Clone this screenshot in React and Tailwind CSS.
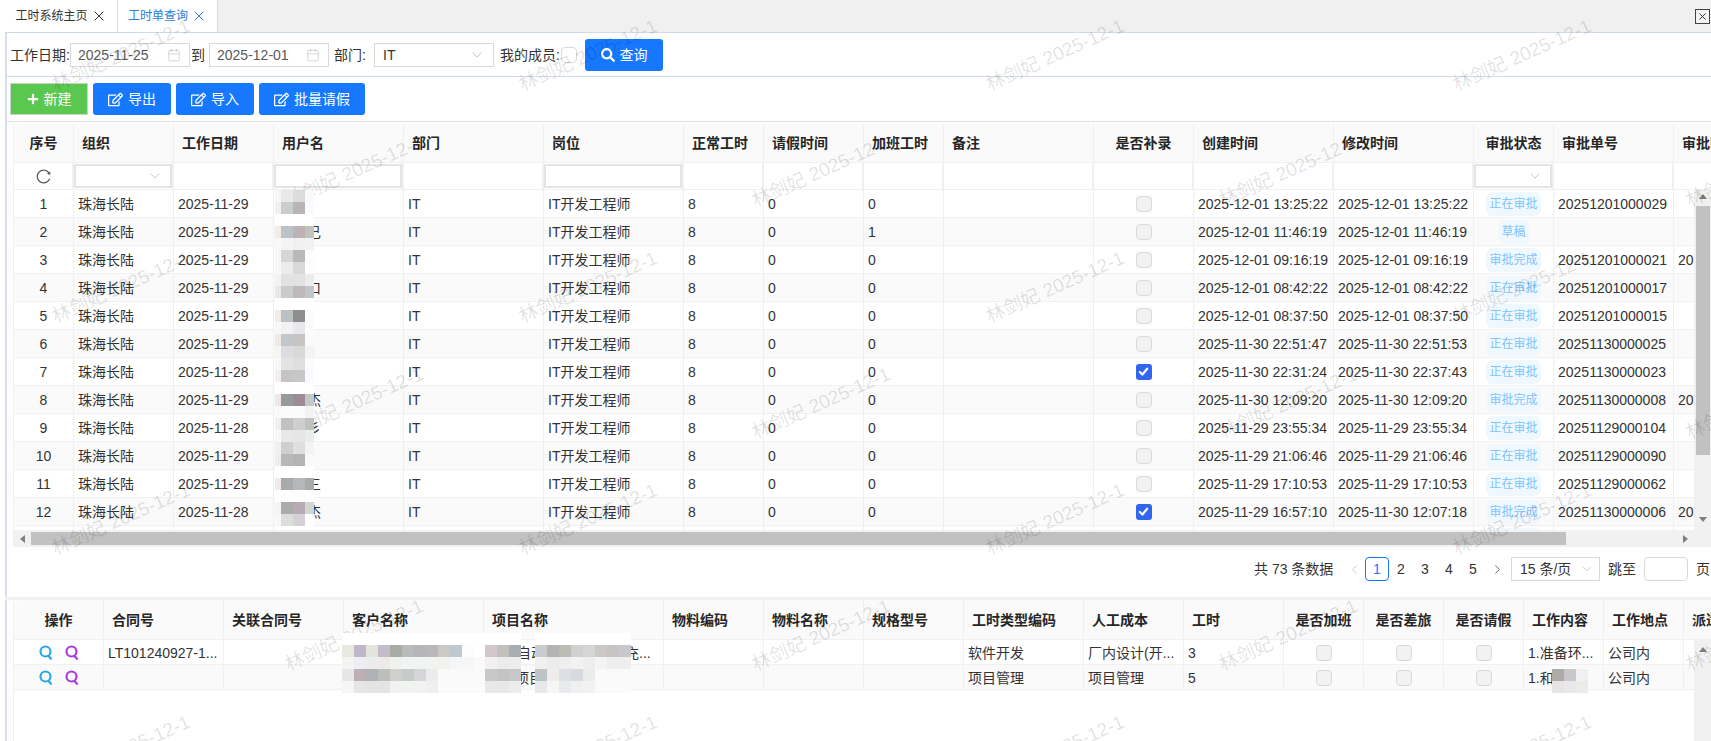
import { ChevronDown, ChevronLeft, ChevronRight, Calendar, X } from "lucide-react"
import { FaPlus, FaRegEdit, FaSearch } from "react-icons/fa"
import { AiOutlineReload } from "react-icons/ai"

const mainCols = [
  { title: "序号", w: "w-[60px]", center: true },
  { title: "组织", w: "w-[100px]" },
  { title: "工作日期", w: "w-[100px]" },
  { title: "用户名", w: "w-[130px]" },
  { title: "部门", w: "w-[140px]" },
  { title: "岗位", w: "w-[140px]" },
  { title: "正常工时", w: "w-[80px]" },
  { title: "请假时间", w: "w-[100px]" },
  { title: "加班工时", w: "w-[80px]" },
  { title: "备注", w: "w-[150px]" },
  { title: "是否补录", w: "w-[100px]", center: true },
  { title: "创建时间", w: "w-[140px]" },
  { title: "修改时间", w: "w-[140px]" },
  { title: "审批状态", w: "w-[80px]", center: true },
  { title: "审批单号", w: "w-[120px]" },
  { title: "审批时间", w: "w-[120px]" },
]

const subCols = [
  { title: "操作", w: "w-[90px]", center: true },
  { title: "合同号", w: "w-[120px]" },
  { title: "关联合同号", w: "w-[120px]" },
  { title: "客户名称", w: "w-[140px]" },
  { title: "项目名称", w: "w-[180px]" },
  { title: "物料编码", w: "w-[100px]" },
  { title: "物料名称", w: "w-[100px]" },
  { title: "规格型号", w: "w-[100px]" },
  { title: "工时类型编码", w: "w-[120px]" },
  { title: "人工成本", w: "w-[100px]" },
  { title: "工时", w: "w-[100px]" },
  { title: "是否加班", w: "w-[80px]", center: true },
  { title: "是否差旅", w: "w-[80px]", center: true },
  { title: "是否请假", w: "w-[80px]", center: true },
  { title: "工作内容", w: "w-[80px]" },
  { title: "工作地点", w: "w-[80px]" },
  { title: "派遣单位", w: "w-[80px]" },
]

// date, name tail, overtime, backfilled, created, modified, status, order no, next col
const rows = [
  ["2025-11-29", "", "0", false, "2025-12-01 13:25:22", "2025-12-01 13:25:22", "正在审批", "20251201000029", ""],
  ["2025-11-29", "己", "1", false, "2025-12-01 11:46:19", "2025-12-01 11:46:19", "草稿", "", ""],
  ["2025-11-29", "", "0", false, "2025-12-01 09:16:19", "2025-12-01 09:16:19", "审批完成", "20251201000021", "20"],
  ["2025-11-29", "口", "0", false, "2025-12-01 08:42:22", "2025-12-01 08:42:22", "正在审批", "20251201000017", ""],
  ["2025-11-29", "", "0", false, "2025-12-01 08:37:50", "2025-12-01 08:37:50", "正在审批", "20251201000015", ""],
  ["2025-11-29", "", "0", false, "2025-11-30 22:51:47", "2025-11-30 22:51:53", "正在审批", "20251130000025", ""],
  ["2025-11-28", "", "0", true, "2025-11-30 22:31:24", "2025-11-30 22:37:43", "正在审批", "20251130000023", ""],
  ["2025-11-29", "杰", "0", false, "2025-11-30 12:09:20", "2025-11-30 12:09:20", "审批完成", "20251130000008", "20"],
  ["2025-11-28", "彡", "0", false, "2025-11-29 23:55:34", "2025-11-29 23:55:34", "正在审批", "20251129000104", ""],
  ["2025-11-29", "", "0", false, "2025-11-29 21:06:46", "2025-11-29 21:06:46", "正在审批", "20251129000090", ""],
  ["2025-11-29", "三", "0", false, "2025-11-29 17:10:53", "2025-11-29 17:10:53", "正在审批", "20251129000062", ""],
  ["2025-11-28", "杰", "0", true, "2025-11-29 16:57:10", "2025-11-30 12:07:18", "审批完成", "20251130000006", "20"],
]

const nameMosaic = [
  ["bg-[#f7f7f7]", "bg-[#e9e9e9]", "bg-[#dcdcde]", "bg-[#f8f9fb]"],
  ["bg-[#f0f0ee]", "bg-[#c9cdcb]", "bg-[#b8b5b6]", "bg-[#fafcff]"],
  ["bg-white", "bg-white", "bg-white", "bg-white"],
  ["bg-[#f0ebe6]", "bg-[#bcc3c8]", "bg-[#bdb2b6]", "bg-[#c2c3bd]"],
  ["bg-[#f8f8f8]", "bg-[#f4f4f6]", "bg-[#f0f0f0]", "bg-[#f2f2f2]"],
  ["bg-[#f8f8f8]", "bg-[#d6d6d6]", "bg-[#b9b9bc]", "bg-[#fcfdff]"],
  ["bg-[#f8f8f8]", "bg-[#ececec]", "bg-[#d9d9d9]", "bg-[#fdfdff]"],
  ["bg-[#f4f2f2]", "bg-[#e2e2e2]", "bg-[#e2e2e2]", "bg-[#ececec]"],
  ["bg-[#ebe6e8]", "bg-[#cbcbca]", "bg-[#bfb9bd]", "bg-[#c3c6c8]"],
  ["bg-white", "bg-white", "bg-white", "bg-white"],
  ["bg-[#f2ece8]", "bg-[#bcc1c4]", "bg-[#8e8e8e]", "bg-[#fafbfd]"],
  ["bg-[#f8f8f8]", "bg-[#f2f2f4]", "bg-[#e8e8ea]", "bg-[#fbfbfd]"],
  ["bg-[#efeae6]", "bg-[#c3c6ca]", "bg-[#c6c5c3]", "bg-[#fbfbfd]"],
  ["bg-[#f6f5f3]", "bg-[#dddce0]", "bg-[#d9d9d9]", "bg-[#f2f3f5]"],
  ["bg-[#f8f8f8]", "bg-[#e2e3e7]", "bg-[#dfdfdf]", "bg-[#fbfcfc]"],
  ["bg-[#f4efeb]", "bg-[#c5c5c7]", "bg-[#c6c8c6]", "bg-[#f8faff]"],
  ["bg-white", "bg-white", "bg-white", "bg-white"],
  ["bg-[#eee8e5]", "bg-[#979a9a]", "bg-[#9c8c98]", "bg-[#c4c8c6]"],
  ["bg-[#fafafa]", "bg-[#fbfbfb]", "bg-[#fbfbfb]", "bg-[#f3f3f3]"],
  ["bg-[#f2eeec]", "bg-[#c1c1c1]", "bg-[#cfcfcd]", "bg-[#c0c2c0]"],
  ["bg-[#f8f8f8]", "bg-[#e8e8e8]", "bg-[#e6e6e6]", "bg-[#ebedeb]"],
  ["bg-[#f2eeee]", "bg-[#cfced0]", "bg-[#dfdfdf]", "bg-[#f3f4f4]"],
  ["bg-[#f0eeec]", "bg-[#b8b8ba]", "bg-[#b4b4b4]", "bg-[#f8f9fb]"],
  ["bg-white", "bg-white", "bg-white", "bg-white"],
  ["bg-[#f0ebe8]", "bg-[#a9aaac]", "bg-[#b4b8b8]", "bg-[#abaaaa]"],
  ["bg-white", "bg-[#fdfdfd]", "bg-[#fdfdfd]", "bg-[#fdfdfd]"],
  ["bg-[#f6f3f0]", "bg-[#a9acaa]", "bg-[#b8aab4]", "bg-[#cfd6d4]"],
  ["bg-[#f8f8f8]", "bg-[#dcdedc]", "bg-[#d5d0d6]", "bg-white"],
]

const customerMosaic = [
  ["bg-white", "bg-white", "bg-white", "bg-white", "bg-white", "bg-white", "bg-white", "bg-white", "bg-white", "bg-white", "bg-white", "bg-white"],
  ["bg-[#e8e8e0]", "bg-[#c0b8c8]", "bg-[#e4e4de]", "bg-[#c4bcc6]", "bg-[#a8aca4]", "bg-[#b8bcbc]", "bg-[#b4b6ba]", "bg-[#b8b8bc]", "bg-[#ccc8c4]", "bg-[#bccacf]", "bg-[#fcfcfc]", "bg-white"],
  ["bg-[#f4f4f2]", "bg-[#eeeef2]", "bg-[#ececec]", "bg-[#eeeaea]", "bg-[#f0f2f0]", "bg-[#f2f4f4]", "bg-[#f2f4f4]", "bg-[#f2f4f2]", "bg-[#f4f2ee]", "bg-[#f4f6f8]", "bg-[#f6f6f6]", "bg-[#fafafa]"],
  ["bg-[#e8e6e4]", "bg-[#bcb0b4]", "bg-[#b0b2b6]", "bg-[#bcc0bc]", "bg-[#d0d0cc]", "bg-[#c8ccc8]", "bg-[#d6d6da]", "bg-[#e8ecec]", "bg-[#fafafa]", "bg-[#fafafa]", "bg-[#fafafa]", "bg-[#fafafa]"],
  ["bg-[#f6f6f6]", "bg-[#e6e6e8]", "bg-[#e4e4e6]", "bg-[#e4e4e4]", "bg-[#f0f2f2]", "bg-[#f2f4f2]", "bg-[#f2f2f0]", "bg-[#eef0f0]", "bg-[#fafafa]", "bg-[#fafafa]", "bg-[#fafafa]", "bg-[#fafafa]"],
]

const projectMosaicA = [
  ["bg-white", "bg-white", "bg-white"],
  ["bg-[#d0c8cc]", "bg-[#c4c0be]", "bg-[#a8aeb2]"],
  ["bg-[#f2f0f0]", "bg-[#ececec]", "bg-[#eceeec]"],
  ["bg-[#c8c8c8]", "bg-[#c4c4c4]", "bg-[#c8c8c8]"],
  ["bg-[#e8e8e8]", "bg-[#e8e8e8]", "bg-[#ececec]"],
]

const projectMosaicB = [
  ["bg-white", "bg-white", "bg-white", "bg-white", "bg-white", "bg-white", "bg-white", "bg-white"],
  ["bg-[#c8ccce]", "bg-[#b4b4b4]", "bg-[#bcbcb4]", "bg-[#d0d0d0]", "bg-[#d4d6d4]", "bg-[#ccc8c8]", "bg-[#c8c4c4]", "bg-[#c8c8cc]"],
  ["bg-[#f0f0f0]", "bg-[#ececec]", "bg-[#eeeeee]", "bg-[#f2f2f2]", "bg-[#eeeeee]", "bg-[#f4f4f6]", "bg-[#eeeeee]", "bg-[#eeeeee]"],
  ["bg-[#bcc4c8]", "bg-[#f0ecec]", "bg-[#dce0e6]", "bg-[#d8dade]", "bg-[#eaecec]", "bg-[#fafafa]", "bg-[#fafafa]", "bg-[#fafafa]"],
  ["bg-[#e6e8ec]", "bg-[#f8f6f4]", "bg-[#e8eaee]", "bg-[#f0f0f2]", "bg-[#f2f2f2]", "bg-[#fafafa]", "bg-[#fafafa]", "bg-[#fafafa]"],
]

const contentMosaic = [
  ["bg-[#aeaaa8]", "bg-[#c8c8cc]", "bg-[#f0f0f4]"],
  ["bg-[#e6e4e4]", "bg-[#e8e8ea]", "bg-[#ecebe8]"],
]

function Mosaic({ bands, cellW, bandH, className, firstW }) {
  return (
    <div className={`absolute z-20 ${className}`}>
      {bands.map((band, i) => (
        <div key={i} className={`flex ${bandH}`}>
          {band.map((color, j) => (
            <div key={j} className={`${color} ${firstW && j === 0 ? firstW : cellW}`} />
          ))}
        </div>
      ))}
    </div>
  )
}

function Tab({ label, active, w }) {
  return (
    <div className={`flex h-8 ${w} items-center justify-center gap-[3px] border-r border-[#d3dce8] bg-white text-xs ${active ? "text-[#2b7cd3]" : "text-[#333]"}`}>
      {label}
      <X size={16} strokeWidth={1.5} />
    </div>
  )
}

function DateInput({ value, w }) {
  return (
    <div className={`flex h-6 ${w} items-center justify-between border border-[#d9d9d9] pl-[7px] pr-2 text-[#595959]`}>
      {value}
      <Calendar size={14} strokeWidth={1.2} className="text-[#c4c4c4]" />
    </div>
  )
}

function BlueButton({ icon, label, w }) {
  return (
    <button className={`flex h-8 ${w} shrink-0 items-center justify-center gap-[5px] rounded-[3px] bg-[#1677ff] text-white`}>
      {icon}
      {label}
    </button>
  )
}

function HeaderRow({ cols, h }) {
  return (
    <div className={`flex ${h} overflow-hidden rounded-tl-lg border-b border-[#f0f0f0] bg-[#fafafa] font-bold text-[#262626]`}>
      {cols.map((col) => (
        <div key={col.title} className={`flex ${col.w} shrink-0 items-center overflow-hidden whitespace-nowrap border-r border-[#f0f0f0] ${col.center ? "justify-center" : "pl-[8px]"}`}>
          {col.title}
        </div>
      ))}
    </div>
  )
}

function FilterBox({ select }) {
  return (
    <div className="flex h-[24px] w-full items-center justify-end border-2 border-[#e4e4e4] bg-white pr-[7px]">
      {select && <ChevronDown size={16} strokeWidth={1} className="text-[#a8a8a8]" />}
    </div>
  )
}

function Check({ checked }) {
  if (checked) {
    return (
      <div className="flex h-4 w-4 items-center justify-center rounded-[3px] bg-[#3366ee]">
        <svg width="11" height="11" viewBox="0 0 12 12" fill="none" stroke="white" strokeWidth="2.4" strokeLinecap="round" strokeLinejoin="round">
          <path d="M2 6.5l2.8 2.8L10 3" />
        </svg>
      </div>
    )
  }
  return <div className="h-4 w-4 rounded-[4px] border border-[#d9d9d9] bg-[#f2f2f2]" />
}

function StatusTag({ text }) {
  return (
    <span className="flex h-6 items-center rounded-md bg-[#f0f8ff] px-[3px] text-xs text-[#7cc3ff]">{text}</span>
  )
}

function Cell({ w, center, children, className = "" }) {
  return (
    <div className={`flex ${w} shrink-0 items-center overflow-hidden whitespace-nowrap border-r border-[#f0f0f0] ${center ? "justify-center" : "pl-[4px]"} ${className}`}>
      {children}
    </div>
  )
}

function ZoomIcon({ className }) {
  return (
    <svg width="14" height="15" viewBox="0 0 14 15" fill="none" stroke="currentColor" strokeWidth="2.2" strokeLinecap="round" className={className}>
      <circle cx="6.5" cy="6.5" r="5" />
      <path d="M9.5 11l2.5 2.8" />
    </svg>
  )
}

function Arrow({ dir }) {
  const points = { up: "0,6 4,1 8,6", down: "0,1 4,6 8,1", left: "6,0 1,4 6,8", right: "1,0 6,4 1,8" }
  return (
    <svg width="8" height="8" viewBox="0 0 8 8" className="shrink-0 fill-[#7d7d7d]">
      <polygon points={points[dir]} />
    </svg>
  )
}

function Watermarks() {
  const marks = []
  for (let r = 0; r < 7; r++) {
    for (let c = 0; c < 4; c++) {
      marks.push({ x: (r % 2 ? 354 : 121) + c * 467, y: 55 + r * 116 })
    }
  }
  return (
    <div className="pointer-events-none absolute inset-0 z-10 overflow-hidden">
      {marks.map((m) => (
        <div
          key={`${m.x}-${m.y}`}
          className="absolute -translate-x-1/2 -translate-y-1/2 -rotate-[24deg] whitespace-nowrap text-[19px] text-black/[0.12]"
          style={{ left: m.x, top: m.y }}
        >
          林剑妃 2025-12-1
        </div>
      ))}
    </div>
  )
}

export default function App() {
  return (
    <div className="relative h-[741px] w-[1711px] overflow-hidden bg-white font-['Liberation_Sans','Noto_Sans_CJK_SC',sans-serif] text-sm text-[#333]">
      <Watermarks />

      {/* tabs */}
      <div className="relative ml-[5px] flex h-8 bg-[#f0f0f0]">
        <Tab label="工时系统主页" w="w-[113px]" />
        <Tab label="工时单查询" active w="w-[100px]" />
        <div className="absolute right-px top-[9px] flex h-[15px] w-[15px] items-center justify-center border border-[#444] bg-[#f4f4f4]">
          <X size={11} strokeWidth={2} className="text-[#222]" />
        </div>
      </div>

      <div className="ml-[5px] border-l-2 border-[#d5dfeb]">
        {/* query */}
        <div className="-ml-[2px] flex h-[45px] items-center border-y border-[#cfdbe9] pl-[5px]">
          <span className="w-[60px]">工作日期:</span>
          <DateInput value="2025-11-25" w="w-[120px]" />
          <span className="w-[19px] pl-[1px]">到</span>
          <DateInput value="2025-12-01" w="w-[120px]" />
          <span className="ml-[5px] w-[40px]">部门:</span>
          <div className="flex h-6 w-[120px] items-center justify-between border border-[#d9d9d9] pl-2 pr-2">
            IT
            <ChevronDown size={16} strokeWidth={1} className="text-[#a8a8a8]" />
          </div>
          <span className="ml-[6px] w-[61px]">我的成员:</span>
          <div className="h-4 w-4 rounded-[4px] border border-[#d9d9d9]" />
          <div className="ml-[8px]">
            <BlueButton icon={<FaSearch size={14} />} label="查询" w="w-[78px]" />
          </div>
        </div>

        {/* toolbar */}
        <div className="-ml-[2px] flex h-[45px] items-center gap-[5px] border-b border-[#dbe0e6] pl-[5px]">
          <button className="flex h-8 w-[78px] items-center justify-center gap-[5px] border border-[#c8d6c4] bg-[#5ac84e] text-white">
            <FaPlus size={12} />
            新建
          </button>
          <BlueButton icon={<FaRegEdit size={15} />} label="导出" w="w-[78px]" />
          <BlueButton icon={<FaRegEdit size={15} />} label="导入" w="w-[78px]" />
          <BlueButton icon={<FaRegEdit size={15} />} label="批量请假" w="w-[106px]" />
        </div>

        {/* main table */}
        <div className="pl-[6px] pt-[2px]">
          <div className="relative w-[1698px] overflow-hidden border-l border-[#f0f0f0]">
            <HeaderRow cols={mainCols} h="h-[39px]" />
            <div className="flex h-[27px] border-b border-[#f0f0f0]">
              {mainCols.map((col) => (
                <div key={col.title} className={`flex ${col.w} shrink-0 items-center justify-center border-r-2 border-[#f0f0f0]`}>
                  {col.title === "序号" && <AiOutlineReload size={17} className="text-[#595959]" />}
                  {(col.title === "组织" || col.title === "审批状态") && <FilterBox select />}
                  {(col.title === "用户名" || col.title === "岗位") && <FilterBox />}
                </div>
              ))}
            </div>

            <div className="flex">
              <div className="h-[340px] w-[1680px] shrink-0 overflow-hidden">
                {rows.map((row, i) => (
                  <div key={i} className={`flex h-[28px] border-b border-[#f0f0f0] ${i % 2 ? "bg-[#fafafa]" : "bg-white"}`}>
                    <Cell w="w-[60px]" center>{i + 1}</Cell>
                    <Cell w="w-[100px]">珠海长陆</Cell>
                    <Cell w="w-[100px]">{row[0]}</Cell>
                    <Cell w="w-[130px]"><span className="pl-[29px]">{row[1]}</span></Cell>
                    <Cell w="w-[140px]">IT</Cell>
                    <Cell w="w-[140px]">IT开发工程师</Cell>
                    <Cell w="w-[80px]">8</Cell>
                    <Cell w="w-[100px]">0</Cell>
                    <Cell w="w-[80px]">{row[2]}</Cell>
                    <Cell w="w-[150px]" />
                    <Cell w="w-[100px]" center><Check checked={row[3]} /></Cell>
                    <Cell w="w-[140px]">{row[4]}</Cell>
                    <Cell w="w-[140px]">{row[5]}</Cell>
                    <Cell w="w-[80px]" center><StatusTag text={row[6]} /></Cell>
                    <Cell w="w-[120px]">{row[7]}</Cell>
                    <Cell w="w-[120px]">{row[8]}</Cell>
                  </div>
                ))}
                <div className="flex h-[28px]">
                  <Cell w="w-[60px]" />
                  <Cell w="w-[100px]" />
                  <Cell w="w-[100px]" />
                  <Cell w="w-[130px]" />
                  <Cell w="w-[140px]" />
                  <Cell w="w-[140px]" />
                  <Cell w="w-[80px]" />
                  <Cell w="w-[100px]" />
                  <Cell w="w-[80px]" />
                  <Cell w="w-[150px]" />
                  <Cell w="w-[100px]" />
                  <Cell w="w-[140px]" />
                  <Cell w="w-[140px]" />
                  <Cell w="w-[80px]" center><StatusTag text="正在审批" /></Cell>
                  <Cell w="w-[120px]" />
                  <Cell w="w-[120px]" />
                </div>
              </div>
              {/* vertical scrollbar */}
              <div className="flex h-[340px] w-[17px] shrink-0 flex-col items-center bg-[#f1f1f1] pt-[3px]">
                <Arrow dir="up" />
                <div className="mt-[5px] h-[249px] w-[14px] bg-[#c1c1c1]" />
                <div className="mt-auto pb-[6px]"><Arrow dir="down" /></div>
              </div>
            </div>

            {/* horizontal scrollbar */}
            <div className="flex h-[17px] items-center bg-[#f1f1f1] pl-[5px]">
              <Arrow dir="left" />
              <div className="ml-[4px] h-[13px] w-[1535px] bg-[#c1c1c1]" />
              <div className="ml-[116px]"><Arrow dir="right" /></div>
            </div>

            <Mosaic bands={nameMosaic} cellW="w-[12px]" firstW="w-[6px]" bandH="h-[12px]" className="left-[261px] top-[66px] w-[39px] [&>div>div:last-child]:w-[9px]" />
          </div>

          {/* pagination */}
          <div className="flex h-[50px] items-center pb-[6px] pl-[1241px] text-[#333]">
            <span className="w-[93px] shrink-0 whitespace-nowrap">共 73 条数据</span>
            <ChevronLeft size={15} strokeWidth={1.2} className="shrink-0 text-[#bbb]" />
            <div className="ml-[3px] flex h-6 w-[24px] shrink-0 items-center justify-center rounded-[4px] border border-[#1677ff] text-[#1677ff]">1</div>
            <span className="w-[24px] shrink-0 text-center">2</span>
            <span className="w-[24px] shrink-0 text-center">3</span>
            <span className="w-[24px] shrink-0 text-center">4</span>
            <span className="w-[24px] shrink-0 text-center">5</span>
            <ChevronRight size={15} strokeWidth={1.4} className="ml-[5px] shrink-0 text-[#555]" />
            <div className="ml-[6px] flex h-6 w-[89px] shrink-0 items-center justify-between border border-[#d9d9d9] pl-2 pr-[5px]">
              15 条/页
              <ChevronDown size={14} strokeWidth={1} className="text-[#a8a8a8]" />
            </div>
            <span className="ml-2 w-[36px] shrink-0">跳至</span>
            <div className="h-6 w-[44px] shrink-0 rounded-[4px] border border-[#d9d9d9]" />
            <span className="ml-2 shrink-0">页</span>
          </div>
        </div>

        {/* detail table */}
        <div className="h-[3px] -ml-[2px] bg-[#f2f2f2]" />
        <div className="pl-[6px]">
          <div className="relative h-[141px] w-[1698px] overflow-hidden border-l border-[#f0f0f0]">
            <HeaderRow cols={subCols} h="h-[40px]" />
            <div className="flex">
              <div className="w-[1680px] shrink-0 overflow-hidden">
                <div className="flex h-[25px] border-b border-[#f0f0f0] [&>div]:pt-px">
                  <Cell w="w-[90px]" center className="gap-[12px]">
                    <ZoomIcon className="text-[#29a9e8]" />
                    <ZoomIcon className="text-[#a83be0]" />
                  </Cell>
                  <Cell w="w-[120px]">LT101240927-1...</Cell>
                  <Cell w="w-[120px]" />
                  <Cell w="w-[140px]" />
                  <Cell w="w-[180px]">
                    <span className="ml-[29px]">自动</span>
                    <span className="ml-[80px]">充...</span>
                  </Cell>
                  <Cell w="w-[100px]" />
                  <Cell w="w-[100px]" />
                  <Cell w="w-[100px]" />
                  <Cell w="w-[120px]">软件开发</Cell>
                  <Cell w="w-[100px]">厂内设计(开...</Cell>
                  <Cell w="w-[100px]">3</Cell>
                  <Cell w="w-[80px]" center><Check /></Cell>
                  <Cell w="w-[80px]" center><Check /></Cell>
                  <Cell w="w-[80px]" center><Check /></Cell>
                  <Cell w="w-[80px]">1.准备环...</Cell>
                  <Cell w="w-[80px]">公司内</Cell>
                  <Cell w="w-[80px]" />
                </div>
                <div className="flex h-[25px] border-b border-[#f0f0f0] bg-[#fafafa] [&>div]:pt-px">
                  <Cell w="w-[90px]" center className="gap-[12px]">
                    <ZoomIcon className="text-[#29a9e8]" />
                    <ZoomIcon className="text-[#a83be0]" />
                  </Cell>
                  <Cell w="w-[120px]" />
                  <Cell w="w-[120px]" />
                  <Cell w="w-[140px]" />
                  <Cell w="w-[180px]"><span className="ml-[27px]">项目</span></Cell>
                  <Cell w="w-[100px]" />
                  <Cell w="w-[100px]" />
                  <Cell w="w-[100px]" />
                  <Cell w="w-[120px]">项目管理</Cell>
                  <Cell w="w-[100px]">项目管理</Cell>
                  <Cell w="w-[100px]">5</Cell>
                  <Cell w="w-[80px]" center><Check /></Cell>
                  <Cell w="w-[80px]" center><Check /></Cell>
                  <Cell w="w-[80px]" center><Check /></Cell>
                  <Cell w="w-[80px]">1.和</Cell>
                  <Cell w="w-[80px]">公司内</Cell>
                  <Cell w="w-[80px]" />
                </div>
              </div>
              <div className="flex h-[101px] w-[17px] shrink-0 flex-col items-center bg-[#f1f1f1] pt-[6px]">
                <Arrow dir="up" />
              </div>
            </div>

            <Mosaic bands={customerMosaic} cellW="w-[12px]" bandH="h-[12px]" className="left-[328px] top-[33px]" />
            <Mosaic bands={projectMosaicA} cellW="w-[12px]" bandH="h-[12px]" className="left-[471px] top-[33px]" />
            <Mosaic bands={projectMosaicB} cellW="w-[12px]" bandH="h-[12px]" className="left-[521px] top-[33px]" />
            <Mosaic bands={contentMosaic} cellW="w-[12px]" bandH="h-[12px]" className="left-[1538px] top-[69px]" />
          </div>
        </div>
      </div>
    </div>
  )
}
